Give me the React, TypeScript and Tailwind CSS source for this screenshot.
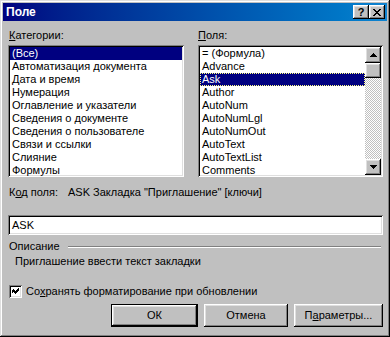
import React from 'react'

const font = 'font-["Liberation_Sans",Arial,sans-serif] text-[11px] text-black'
const sunken =
  'shadow-[inset_1px_1px_0_#808080,inset_-1px_-1px_0_#ffffff,inset_2px_2px_0_#000000,inset_-2px_-2px_0_#dfdfdf]'
const raised =
  'shadow-[inset_-1px_-1px_0_#000000,inset_1px_1px_0_#ffffff,inset_-2px_-2px_0_#808080,inset_2px_2px_0_#dfdfdf]'

const categories = [
  '(Все)',
  'Автоматизация документа',
  'Дата и время',
  'Нумерация',
  'Оглавление и указатели',
  'Сведения о документе',
  'Сведения о пользователе',
  'Связи и ссылки',
  'Слияние',
  'Формулы',
]

const fields = [
  '= (Формула)',
  'Advance',
  'Ask',
  'Author',
  'AutoNum',
  'AutoNumLgl',
  'AutoNumOut',
  'AutoText',
  'AutoTextList',
  'Comments',
]

const Arrow = ({ down }: { down?: boolean }) => (
  <svg width="7" height="4" viewBox="0 0 7 4" shapeRendering="crispEdges">
    {down ? (
      <path d="M0 0h7v1H0zM1 1h5v1H1zM2 2h3v1H2zM3 3h1v1H3z" fill="#000" />
    ) : (
      <path d="M3 0h1v1H3zM2 1h3v1H2zM1 2h5v1H1zM0 3h7v1H0z" fill="#000" />
    )}
  </svg>
)

const ScrollBar = () => (
  <div className="flex flex-col w-[16px] h-full">
    <div className={`h-[16px] bg-[#c0c0c0] flex items-center justify-center ${raised}`}>
      <Arrow />
    </div>
    <div className={`h-[15px] bg-[#c0c0c0] ${raised}`} />
    <div className="flex-1 bg-[repeating-conic-gradient(#c0c0c0_0%_25%,#ffffff_0%_50%)] bg-[length:2px_2px]" />
    <div className={`h-[16px] bg-[#c0c0c0] flex items-center justify-center ${raised}`}>
      <Arrow down />
    </div>
  </div>
)

const Button = ({
  children,
  width,
  isDefault,
}: {
  children: React.ReactNode
  width: string
  isDefault?: boolean
}) => (
  <div className={`${width} h-[23px] ${isDefault ? 'border border-black' : ''}`}>
    <div className={`h-full bg-[#c0c0c0] flex items-center justify-center ${raised}`}>
      {children}
    </div>
  </div>
)

export default function App() {
  return (
    <div
      className={`w-[390px] h-[337px] bg-[#c0c0c0] p-[3px] flex flex-col ${font} shadow-[inset_-1px_-1px_0_#000000,inset_1px_1px_0_#dfdfdf,inset_-2px_-2px_0_#808080,inset_2px_2px_0_#ffffff]`}
    >
      <div className="h-[18px] bg-gradient-to-r from-[#000080] to-[#1084d0] flex items-center justify-between pl-[3px] pr-[2px]">
        <span className="text-white font-bold text-[12px] leading-none">Поле</span>
        <div className="flex">
          <div className={`w-[16px] h-[14px] bg-[#c0c0c0] flex items-center justify-center font-bold text-[11px] leading-none ${raised}`}>
            ?
          </div>
          <div className={`w-[16px] h-[14px] bg-[#c0c0c0] flex items-center justify-center ${raised}`}>
            <svg width="8" height="7" viewBox="0 0 8 7" shapeRendering="crispEdges">
              <path
                d="M0 0h2v1H0zM6 0h2v1H6zM1 1h2v1H1zM5 1h2v1H5zM2 2h4v1H2zM3 3h2v1H3zM2 4h4v1H2zM1 5h2v1H1zM5 5h2v1H5zM0 6h2v1H0zM6 6h2v1H6z"
                fill="#000"
              />
            </svg>
          </div>
        </div>
      </div>

      <div className="flex-1 flex flex-col pl-[5px] pr-[4px]">
        <div className="flex gap-[14px] mt-[8px]">
          <div className="w-[176px] flex flex-col">
            <div className="leading-[13px] pl-[1px]">
              <u>К</u>атегории:
            </div>
            <div className={`mt-[3px] h-[132px] bg-white p-[2px] ${sunken}`}>
              {categories.map((c, i) => (
                <div
                  key={c}
                  className={`h-[13px] leading-[13px] px-[2px] whitespace-nowrap ${i === 0 ? 'bg-[#000080] text-white' : ''}`}
                >
                  {c}
                </div>
              ))}
            </div>
          </div>
          <div className="w-[185px] flex flex-col">
            <div className="leading-[13px]">
              <u>П</u>оля:
            </div>
            <div className={`mt-[3px] h-[132px] bg-white p-[2px] flex ${sunken}`}>
              <div className="flex-1">
                {fields.map((f, i) => (
                  <div
                    key={f}
                    className={`h-[13px] leading-[13px] px-[2px] whitespace-nowrap ${i === 2 ? 'bg-[#000080] text-white outline-1 outline-dotted outline-[#ffff80] -outline-offset-1' : ''}`}
                  >
                    {f}
                  </div>
                ))}
              </div>
              <ScrollBar />
            </div>
          </div>
        </div>

        <div className="flex mt-[9px] leading-[13px] pl-[1px]">
          <span className="w-[59px]">
            К<u>о</u>д поля:
          </span>
          <span>ASK Закладка "Приглашение" [ключи]</span>
        </div>

        <div className={`mt-[16px] h-[20px] bg-white flex items-center px-[4px] ${sunken}`}>
          ASK
        </div>

        <div className="flex items-center mt-[5px] leading-[13px] pl-[1px]">
          <span>Описание</span>
          <div className="flex-1 ml-[8px] mr-[2px] h-[2px] border-t border-[#808080] border-b border-b-white" />
        </div>

        <div className="mt-[2px] leading-[13px] pl-[7px]">Приглашение ввести текст закладки</div>

        <div className="flex items-center mt-[17px] pl-[1px]">
          <div className={`w-[13px] h-[13px] bg-white flex items-center justify-center ${sunken}`}>
            <svg width="7" height="7" viewBox="0 0 7 7" shapeRendering="crispEdges">
              <path d="M6 0h1v3H6zM5 1h1v3H5zM4 2h1v3H4zM3 3h1v3H3zM2 2h1v3H2zM1 1h1v3H1zM0 2h1v3H0z" fill="#000" />
            </svg>
          </div>
          <span className="ml-[4px] leading-[13px]">
            Со<u>х</u>ранять форматирование при обновлении
          </span>
        </div>

        <div className="flex justify-end gap-[6px] mt-[6px]">
          <Button width="w-[87px]" isDefault>
            ОК
          </Button>
          <Button width="w-[84px]">Отмена</Button>
          <Button width="w-[89px]">
            П<u>а</u>раметры...
          </Button>
        </div>
      </div>
    </div>
  )
}
